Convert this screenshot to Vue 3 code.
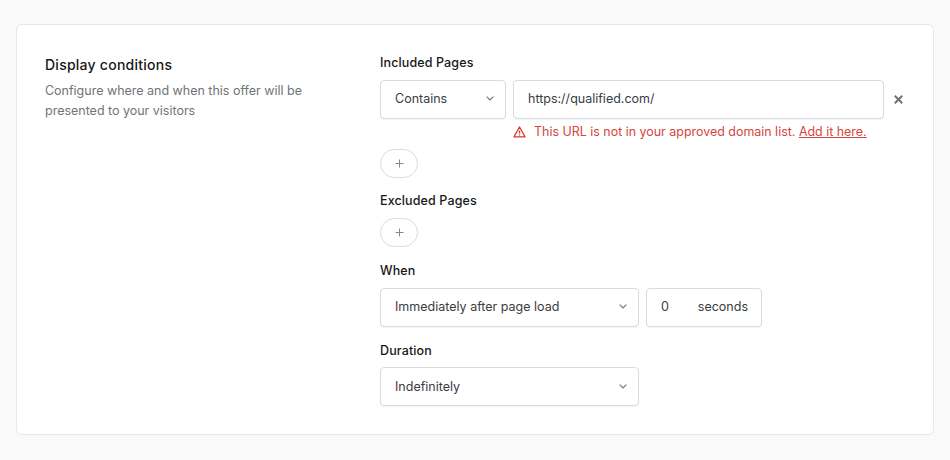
<script setup>
const chevron = 'M.6 .6L4 4l3.4-3.4'
</script>

<template>
  <div class="page">
    <section class="card">
      <div class="intro">
        <h2 class="title">Display conditions</h2>
        <p class="desc">Configure where and when this offer will be presented to your visitors</p>
      </div>
      <div class="form">
        <div class="group g-included">
          <div class="label">Included Pages</div>
          <div class="row">
            <div class="field select contains">
              <span>Contains</span>
              <svg class="chev" width="8" height="5" viewBox="0 0 8 5"><path :d="chevron" /></svg>
            </div>
            <div class="field url">https://qualified.com/</div>
            <svg class="close" width="9" height="9" viewBox="0 0 9 9"><path d="M.8 .8l7.4 7.4M8.2 .8L.8 8.2" /></svg>
          </div>
          <div class="error">
            <svg class="warn" width="13" height="12" viewBox="0 0 13 12">
              <path d="M6.5 1L12 10.8H1L6.5 1Z" />
              <path d="M6.5 4.4v3.2M6.5 8.6v.8" />
            </svg>
            <span>This URL is not in your approved domain list. <a class="link">Add it here.</a></span>
          </div>
          <button class="add">
            <svg width="9" height="9" viewBox="0 0 9 9"><path d="M4.5 .5v8M.5 4.5h8" /></svg>
          </button>
        </div>
        <div class="group g-excluded">
          <div class="label">Excluded Pages</div>
          <button class="add">
            <svg width="9" height="9" viewBox="0 0 9 9"><path d="M4.5 .5v8M.5 4.5h8" /></svg>
          </button>
        </div>
        <div class="group g-when">
          <div class="label">When</div>
          <div class="row">
            <div class="field select wide">
              <span>Immediately after page load</span>
              <svg class="chev" width="8" height="5" viewBox="0 0 8 5"><path :d="chevron" /></svg>
            </div>
            <div class="field seconds">
              <span>0</span>
              <span>seconds</span>
            </div>
          </div>
        </div>
        <div class="group g-duration">
          <div class="label">Duration</div>
          <div class="row">
            <div class="field select wide">
              <span>Indefinitely</span>
              <svg class="chev" width="8" height="5" viewBox="0 0 8 5"><path :d="chevron" /></svg>
            </div>
          </div>
        </div>
      </div>
    </section>
  </div>
</template>

<style scoped>
.page {
  width: 950px;
  height: 460px;
  box-sizing: border-box;
  padding: 24px 16px 25px;
  background: #f9f9f9;
  font-family: Inter, "Liberation Sans", sans-serif;
  overflow: hidden;
}
.card {
  box-sizing: border-box;
  width: 918px;
  height: 411px;
  display: flex;
  padding: 28px;
  background: #fff;
  border: 1px solid #e6e7ea;
  border-radius: 6px;
}
.intro {
  width: 335px;
  flex: none;
}
.title {
  margin: 1px 0 0;
  font-size: 14px;
  line-height: 22px;
  font-weight: 500;
  color: #16181b;
  letter-spacing: 0.25px;
}
.desc {
  margin: 5px 0 0;
  width: 275px;
  font-size: 12.5px;
  line-height: 20px;
  color: #707479;
  letter-spacing: -0.01px;
}
.form {
  flex: 1;
  display: flex;
  flex-direction: column;
}
.label {
  font-size: 12.5px;
  line-height: 18px;
  font-weight: 500;
  color: #16181b;
  letter-spacing: 0.12px;
  margin-bottom: 8px;
}
.row {
  display: flex;
  align-items: center;
  gap: 7px;
}
.field {
  box-sizing: border-box;
  height: 39px;
  display: flex;
  align-items: center;
  background: #fff;
  border: 1px solid #d8dbe1;
  border-radius: 4px;
  box-shadow: 0 1px 1px rgba(20, 25, 40, 0.05);
  font-size: 12.5px;
  color: #3a3d41;
  padding: 0 14px 2px;
}
.select {
  justify-content: space-between;
  padding-right: 11px;
}
.contains { width: 126px; }
.url { width: 371px; }
.wide { width: 259px; }
.seconds {
  width: 116px;
  justify-content: space-between;
  padding-right: 13px;
}
.chev path {
  fill: none;
  stroke: #707479;
  stroke-width: 1.1;
}
.close {
  margin-left: 3px;
}
.close path {
  fill: none;
  stroke: #6c7378;
  stroke-width: 2;
}
.error {
  display: flex;
  align-items: center;
  gap: 8px;
  margin: 5px 0 0 133px;
  font-size: 12.45px;
  line-height: 16px;
  color: #d4453a;
}
.warn path {
  fill: none;
  stroke: #d8382c;
  stroke-width: 1.3;
  stroke-linejoin: round;
}
.link {
  text-decoration: underline;
}
.add {
  display: flex;
  align-items: center;
  justify-content: center;
  width: 38px;
  height: 29px;
  padding: 0;
  background: #fff;
  border: 1px solid #d8dbe1;
  border-radius: 15px;
}
.add path {
  fill: none;
  stroke: #85898e;
  stroke-width: 1;
}
.g-included { padding-top: 1px; }
.g-included .add { margin-top: 9px; }
.g-excluded { margin-top: 14px; }
.g-when { margin-top: 15px; }
.g-duration { margin-top: 15px; }
.g-duration .label { margin-bottom: 7px; }
.g-duration .field { padding-bottom: 1px; }
</style>

<style>
html, body { margin: 0; background: #f9f9f9; }
</style>
